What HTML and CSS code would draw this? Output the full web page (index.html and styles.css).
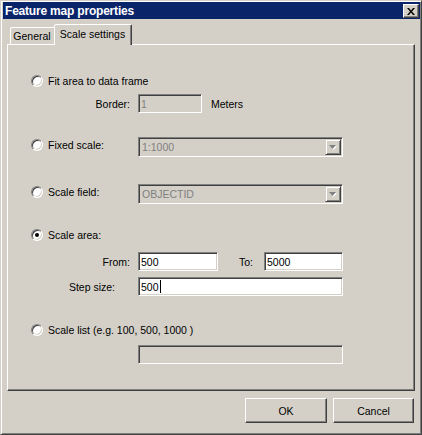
FILE: index.html
```html
<!DOCTYPE html>
<html>
<head>
<meta charset="utf-8">
<link rel="stylesheet" href="styles.css">
</head>
<body>
<div class="window">
  <div class="titlebar">
    <span class="title">Feature map properties</span>
    <span class="close"><svg width="8" height="7" viewBox="0 0 8 7"><path d="M0 0h2l2 2.4L6 0h2L5 3.5 8 7H6L4 4.6 2 7H0l3-3.5z" fill="#000"/></svg></span>
  </div>
  <div class="tabs">
    <div class="tab">General</div>
    <div class="tab active">Scale settings</div>
  </div>
  <div class="panel">
    <div class="row radio-row r-fit"><span class="radio"></span><span>Fit area to data frame</span></div>
    <div class="row field-row r-border"><span class="lbl">Border:</span><span class="box disabled w-border">1</span><span class="unit">Meters</span></div>
    <div class="row combo-row r-fixed"><span class="radio-label"><span class="radio"></span>Fixed scale:</span><span class="combo disabled"><span class="combo-text">1:1000</span><span class="drop"><svg width="8" height="5" viewBox="0 0 8 5"><path d="M1 1h7L4.5 5z" fill="#fff"/><path d="M0 0h7L3.5 4z" fill="#808080"/></svg></span></span></div>
    <div class="row combo-row r-field"><span class="radio-label"><span class="radio"></span>Scale field:</span><span class="combo disabled"><span class="combo-text">OBJECTID</span><span class="drop"><svg width="8" height="5" viewBox="0 0 8 5"><path d="M1 1h7L4.5 5z" fill="#fff"/><path d="M0 0h7L3.5 4z" fill="#808080"/></svg></span></span></div>
    <div class="row radio-row r-area"><span class="radio checked"></span><span>Scale area:</span></div>
    <div class="row field-row r-from"><span class="lbl">From:</span><span class="box w-from">500</span><span class="lbl-to">To:</span><span class="box w-to">5000</span></div>
    <div class="row field-row r-step"><span class="lbl lbl-step">Step size:</span><span class="box w-full">500<span class="caret"></span></span></div>
    <div class="row radio-row r-list"><span class="radio"></span><span>Scale list (e.g. 100, 500, 1000 )</span></div>
    <div class="row field-row r-listbox"><span class="lbl"></span><span class="box disabled w-full"></span></div>
  </div>
  <div class="buttons">
    <span class="btn btn-ok">OK</span>
    <span class="btn btn-cancel">Cancel</span>
  </div>
</div>
</body>
</html>
```
FILE: styles.css
```css
html, body {
  margin: 0;
  padding: 0;
  background: #d4d0c8;
}
body {
  font-family: "Liberation Sans", Arial, sans-serif;
  font-size: 10.5px;
  color: #000;
}
.window {
  width: 422px;
  height: 435px;
  box-sizing: border-box;
  border: 1px solid;
  border-color: #d4d0c8 #404040 #404040 #d4d0c8;
  box-shadow: inset 1px 1px 0 #fff, inset -1px -1px 0 #808080;
  padding: 1px 1px 2px 2px;
  background: #d4d0c8;
  display: flex;
  flex-direction: column;
}
.titlebar {
  height: 17px;
  flex: none;
  background: #0a246a;
  display: flex;
  align-items: center;
  padding-left: 2px;
  padding-right: 1px;
}
.title {
  color: #fff;
  font-weight: bold;
  font-size: 12px;
  letter-spacing: -0.2px;
  flex: 1;
  white-space: nowrap;
}
.close {
  width: 16px;
  height: 14px;
  box-sizing: border-box;
  margin-top: 1px;
  background: #d4d0c8;
  border: 1px solid;
  border-color: #fff #404040 #404040 #fff;
  box-shadow: inset -1px -1px 0 #808080;
  display: flex;
  align-items: center;
  justify-content: center;
  padding-right: 1px;
}
.tabs {
  height: 25px;
  flex: none;
  display: flex;
  align-items: flex-end;
  padding-left: 7px;
}
.tab {
  box-sizing: border-box;
  height: 17px;
  width: 46px;
  border: 1px solid;
  border-bottom: none;
  border-color: #fff #404040 transparent #fff;
  box-shadow: inset -1px 0 0 #808080;
  border-radius: 2px 2px 0 0;
  display: flex;
  align-items: center;
  justify-content: center;
  padding: 0 3px 0 1px;
  white-space: nowrap;
}
.tab.active {
  position: relative;
  z-index: 1;
  width: 78px;
  height: 21px;
  margin-left: -2px;
  margin-bottom: -1px;
  background: #d4d0c8;
  padding: 0 1px 0 0;
  align-items: flex-start;
  padding-top: 3px;
}
.panel {
  flex: none;
  width: 408px;
  height: 347px;
  box-sizing: border-box;
  margin-left: 4px;
  border: 1px solid;
  border-color: #fff #404040 #404040 #fff;
  box-shadow: inset -1px -1px 0 #808080;
  display: flex;
  flex-direction: column;
}
.row {
  display: flex;
  align-items: center;
  flex: none;
  white-space: nowrap;
}
.radio-row {
  height: 14px;
  padding-left: 23px;
}
.radio {
  width: 12px;
  height: 12px;
  box-sizing: border-box;
  border-radius: 50%;
  border: 1px solid;
  border-color: #808080 #fff #fff #808080;
  box-shadow: inset 1px 1px 0 #404040, inset -1px -1px 0 #d4d0c8;
  background: #fff;
  flex: none;
  margin-right: 5px;
  display: flex;
  align-items: center;
  justify-content: center;
}
.radio.checked::after {
  content: "";
  width: 4px;
  height: 4px;
  border-radius: 50%;
  background: #000;
}
.combo-row {
  height: 20px;
  padding-left: 23px;
}
.radio-label {
  width: 107px;
  display: flex;
  align-items: center;
  margin-bottom: 4px;
  flex: none;
}
.field-row {
  height: 19px;
}
.lbl {
  width: 130px;
  box-sizing: border-box;
  padding-right: 8px;
  text-align: right;
  flex: none;
}
.lbl-step {
  padding-right: 23px;
}
.lbl-to {
  width: 46px;
  box-sizing: border-box;
  padding-right: 11px;
  text-align: right;
  flex: none;
}
.box {
  height: 19px;
  box-sizing: border-box;
  border: 1px solid;
  border-color: #808080 #fff #fff #808080;
  box-shadow: inset 1px 1px 0 #404040, inset -1px -1px 0 #d4d0c8;
  background: #fff;
  padding: 0 2px 0 2px;
  display: flex;
  align-items: center;
  flex: none;
}
.box.disabled {
  background: #d4d0c8;
  color: #808080;
}
.w-border { width: 64px; }
.w-from { width: 80px; }
.w-to { width: 79px; }
.w-full { width: 205px; }
.unit {
  margin-left: 9px;
}
.caret {
  display: inline-block;
  width: 1px;
  height: 13px;
  background: #000;
  margin-left: 1px;
}
.combo {
  width: 205px;
  height: 20px;
  box-sizing: border-box;
  border: 1px solid;
  border-color: #808080 #fff #fff #808080;
  box-shadow: inset 1px 1px 0 #404040, inset -1px -1px 0 #d4d0c8;
  display: flex;
  align-items: center;
  padding: 1px 1px 1px 2px;
  flex: none;
}
.combo.disabled {
  background: #d4d0c8;
  color: #808080;
}
.combo-text {
  flex: 1;
  padding-left: 1px;
}
.drop {
  width: 16px;
  height: 16px;
  box-sizing: border-box;
  border: 1px solid;
  border-color: #d4d0c8 #404040 #404040 #d4d0c8;
  box-shadow: inset 1px 1px 0 #fff, inset -1px -1px 0 #808080;
  background: #d4d0c8;
  display: flex;
  align-items: center;
  justify-content: center;
  padding-top: 1px;
}
.r-fit { margin-top: 29px; }
.r-border { margin-top: 6px; }
.r-fixed { margin-top: 24px; }
.r-field { margin-top: 27px; }
.r-area { margin-top: 24px; }
.r-from { margin-top: 10px; }
.r-step { margin-top: 6px; }
.r-list { margin-top: 27px; }
.r-listbox { margin-top: 8px; }
.buttons {
  flex: none;
  display: flex;
  justify-content: flex-end;
  gap: 6px;
  margin-top: 7px;
  padding-right: 6px;
}
.btn {
  height: 25px;
  box-sizing: border-box;
  border: 1px solid;
  border-color: #fff #404040 #404040 #fff;
  box-shadow: inset -1px -1px 0 #808080;
  background: #d4d0c8;
  display: flex;
  align-items: center;
  justify-content: center;
}
.btn-ok { width: 82px; }
.btn-cancel { width: 81px; }
```
